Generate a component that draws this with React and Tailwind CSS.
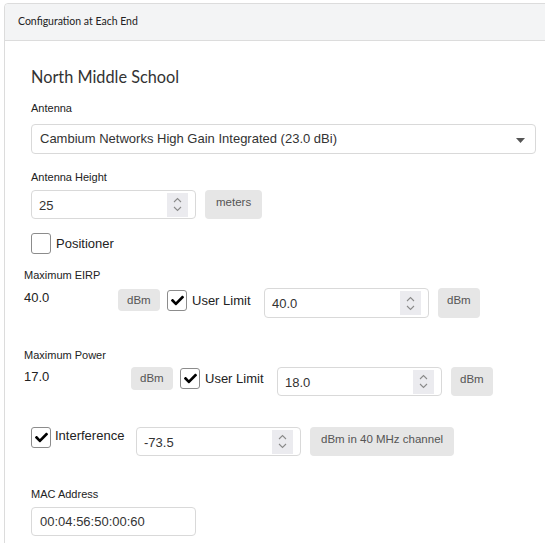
import { FaCheck } from 'react-icons/fa';

const sans = { fontFamily: '"Liberation Sans", Arial, sans-serif' };
const lato = { fontFamily: 'Lato, "Liberation Sans", sans-serif' };

// Small grey unit tag next to inputs
function Badge({ children, className = '' }) {
  return (
    <div
      className={`shrink-0 rounded-[4px] bg-[#e6e6e6] px-[9px] pt-[5px] text-[11.5px] leading-[13px] text-[#555] ${className}`}
    >
      {children}
    </div>
  );
}

function CheckBox({ checked, className = '' }) {
  return (
    <div
      className={`shrink-0 w-[20px] h-[21px] rounded-[3px] border border-[#8c8c8c] bg-white flex items-center justify-center ${className}`}
    >
      {checked && <FaCheck className="w-[13px] h-[13px] text-black" />}
    </div>
  );
}

function Spinner() {
  return (
    <div className="w-[21px] h-[24px] bg-[#ebebef] flex flex-col items-center justify-center gap-[3px]">
      <svg width="9" height="6" viewBox="0 0 9 6" fill="none" stroke="#8a8a8a" strokeWidth="1.1">
        <path d="M1 5 L4.5 1.5 L8 5" />
      </svg>
      <svg width="9" height="6" viewBox="0 0 9 6" fill="none" stroke="#8a8a8a" strokeWidth="1.1">
        <path d="M1 1 L4.5 4.5 L8 1" />
      </svg>
    </div>
  );
}

function NumInput({ value, className = '' }) {
  return (
    <div
      className={`shrink-0 w-[165px] h-[29px] rounded-[4px] border border-[#d9d9d9] bg-white flex items-center justify-between pl-[7px] pr-[7px] ${className}`}
    >
      <span className="text-[13px] text-[#333] pt-[2px]">{value}</span>
      <Spinner />
    </div>
  );
}

function Label({ children, className = '' }) {
  return <div className={`text-[11px] leading-[14px] text-[#222] ${className}`}>{children}</div>;
}

export default function App() {
  return (
    <div className="w-[545px] h-[543px] overflow-hidden bg-white pl-[4px] pt-[3px]" style={sans}>
      <div className="w-[600px] h-[600px] border border-[#dcdcdc] rounded-t-[4px]">
        {/* Panel header */}
        <div
          className="h-[37px] bg-[#f3f4f5] border-b border-[#dcdcdc] rounded-t-[4px] pl-[13px] flex items-center text-[10.5px] text-[#222]"
          style={lato}
        >
          Configuration at Each End
        </div>

        <div className="pl-[19px] pt-[26px]">
          <div className="pl-[7px]">
            <h2 className="text-[16.3px] leading-[20px] text-[#333]" style={lato}>
              North Middle School
            </h2>

            <Label className="mt-[14px]">Antenna</Label>
            <div className="mt-[9px] w-[505px] h-[30px] rounded-[4px] border border-[#d9d9d9] flex items-center justify-between pl-[8px] pr-[10px]">
              <span className="text-[13px] text-[#333]">Cambium Networks High Gain Integrated (23.0 dBi)</span>
              <svg width="9" height="5" viewBox="0 0 9 5" className="mt-[3px]">
                <path d="M0 0 L9 0 L4.5 5 Z" fill="#555" />
              </svg>
            </div>

            <Label className="mt-[16px]">Antenna Height</Label>
            <div className="mt-[6px] flex items-start">
              <NumInput value="25" />
              <Badge className="ml-[9px] h-[29px] px-[11px] pt-[6px]">meters</Badge>
            </div>

            <div className="mt-[14px] flex items-center">
              <CheckBox />
              <span className="ml-[5px] text-[13px] text-[#222]">Positioner</span>
            </div>
          </div>

          <Label className="mt-[14px]">Maximum EIRP</Label>
          <div className="mt-[6px] flex items-start">
            <span className="w-[94px] mt-[2px] text-[13px] leading-[16px] text-[#222]">40.0</span>
            <Badge className="w-[42px] h-[22px] mt-[1px]">dBm</Badge>
            <CheckBox checked className="ml-[7px] mt-[2px]" />
            <span className="w-[77px] pl-[5px] mt-[5px] text-[13px] leading-[16px] text-[#222]">User Limit</span>
            <NumInput value="40.0" className="h-[30px]" />
            <Badge className="ml-[9px] w-[42px] h-[30px] pt-[6px]">dBm</Badge>
          </div>

          <Label className="mt-[30px]">Maximum Power</Label>
          <div className="mt-[5px] flex items-start">
            <span className="w-[107px] mt-[2px] text-[13px] leading-[16px] text-[#222]">17.0</span>
            <Badge className="w-[42px] h-[23px]">dBm</Badge>
            <CheckBox checked className="ml-[7px] mt-[1px]" />
            <span className="w-[77px] pl-[5px] mt-[4px] text-[13px] leading-[16px] text-[#222]">User Limit</span>
            <NumInput value="18.0" />
            <Badge className="ml-[9px] w-[42px] h-[29px] pt-[6px]">dBm</Badge>
          </div>

          <div className="pl-[7px]">
            <div className="mt-[31px] flex items-start">
              <CheckBox checked />
              <span className="w-[85px] pl-[4px] mt-[1px] text-[13px] leading-[16px] text-[#222]">Interference</span>
              <NumInput value="-73.5" />
              <Badge className="ml-[9px] h-[29px] px-[11px] pt-[6px]">dBm in 40 MHz channel</Badge>
            </div>

            <Label className="mt-[31px]">MAC Address</Label>
            <div className="mt-[6px] w-[165px] h-[29px] rounded-[4px] border border-[#d9d9d9] flex items-center pl-[8px]">
              <span className="text-[13px] text-[#333] pt-[1px]">00:04:56:50:00:60</span>
            </div>
          </div>
        </div>
      </div>
    </div>
  );
}
